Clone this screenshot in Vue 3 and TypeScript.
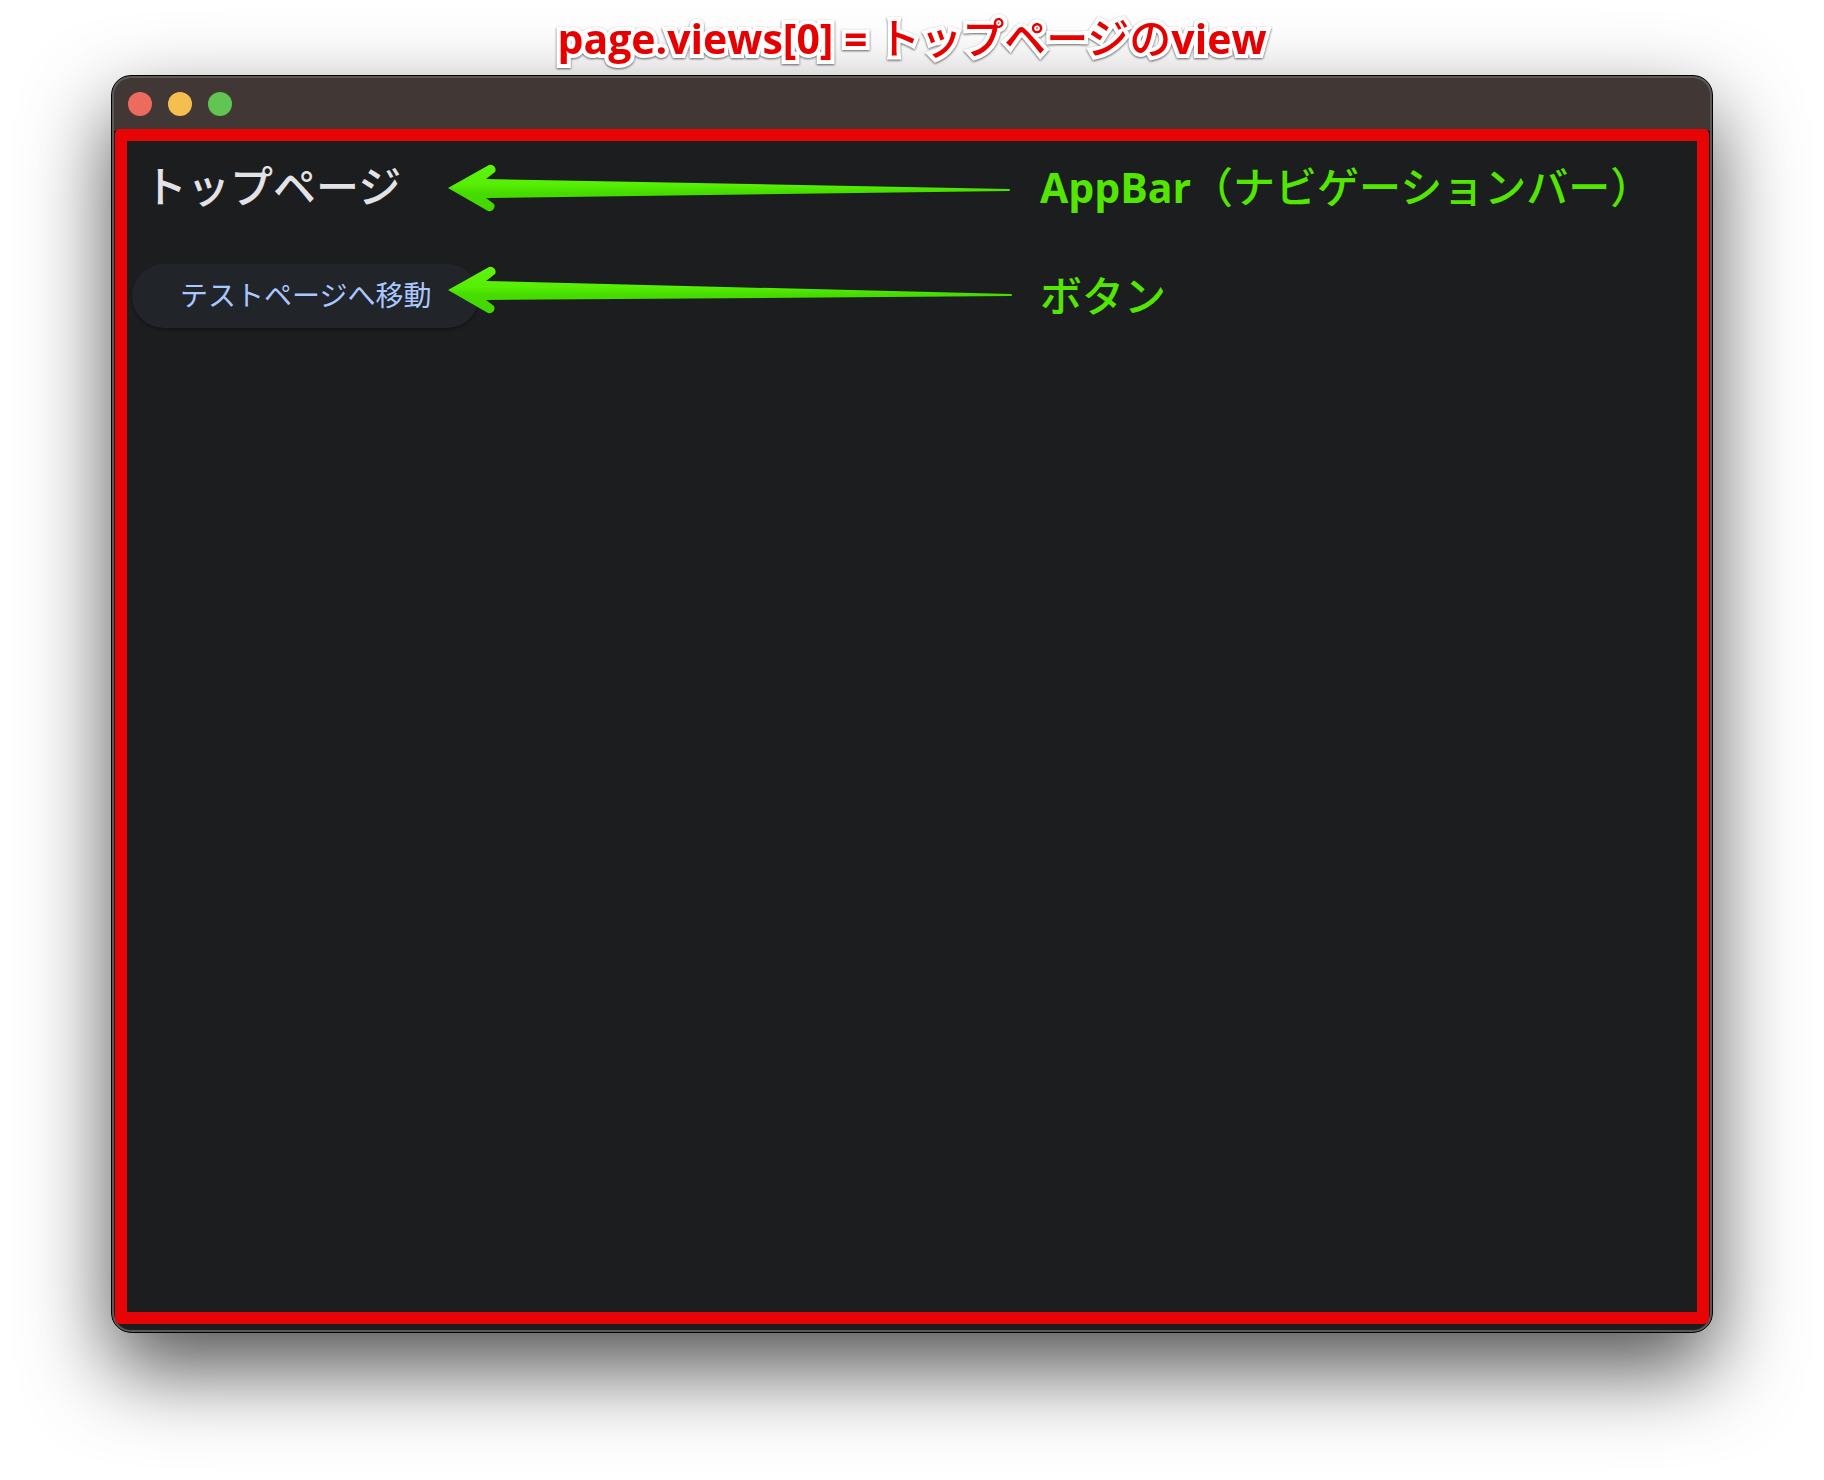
<script setup lang="ts">
interface Note {
  id: string
  latin: string
  kana: string
  arrow: string
}

const title = 'トップページ'
const buttonLabel = 'テストページへ移動'
const controls: string[] = ['close', 'minimize', 'zoom']
const notes: Note[] = [
  {
    id: 'first',
    latin: 'AppBar',
    kana: '（ナビゲーションバー）',
    arrow: 'M0 25 L41 2 A5 5 0 0 1 47 9 L38 16 L561 26 A1 1 0 0 1 561 28 L38 35 L46 41 A5 5 0 0 1 40 48 Z',
  },
  {
    id: 'second',
    latin: '',
    kana: 'ボタン',
    arrow: 'M0 25 L41 2 A5 5 0 0 1 47 9 L38 16 L563 29 A1 1 0 0 1 563 31 L38 35 L46 41 A5 5 0 0 1 40 48 Z',
  },
]
</script>

<template>
  <div class="page">
    <h1 class="heading">
      <span class="latin">page.views[0] = </span>トップページの<span class="latin">view</span>
    </h1>
    <main class="window">
      <header class="titlebar">
        <button
          v-for="name in controls"
          :key="name"
          type="button"
          class="dot"
          :class="name"
          :aria-label="name"
        ></button>
      </header>
      <section class="view">
        <div class="appbar">
          <h2 class="title">{{ title }}</h2>
        </div>
        <div class="body">
          <button type="button" class="move">{{ buttonLabel }}</button>
        </div>
        <div class="notes">
          <div v-for="note in notes" :key="note.id" class="note">
            <svg class="arrow" width="564" height="50" viewBox="0 0 564 50" aria-hidden="true">
              <defs>
                <linearGradient :id="'fill-' + note.id" x1="0" y1="0" x2="0" y2="1">
                  <stop offset="0" stop-color="#5cf50c" />
                  <stop offset="0.45" stop-color="#56ee04" />
                  <stop offset="0.6" stop-color="#46dc00" />
                  <stop offset="1" stop-color="#42d600" />
                </linearGradient>
              </defs>
              <path :fill="`url(#fill-${note.id})`" :d="note.arrow" />
            </svg>
            <span class="caption"><span class="latin">{{ note.latin }}</span>{{ note.kana }}</span>
          </div>
        </div>
      </section>
    </main>
  </div>
</template>

<style>
body {
  margin: 0;
  background: #fff;
}
</style>

<style scoped>
.page {
  box-sizing: border-box;
  min-height: 100vh;
  padding: 0 111px 147px;
  display: flex;
  flex-direction: column;
  overflow: hidden;
  font-family: "Open Sans", "Noto Sans CJK JP", sans-serif;
}

.heading {
  position: relative;
  z-index: 1;
  margin: 0;
  height: 75px;
  line-height: 75px;
  text-align: center;
  white-space: nowrap;
  font-size: 42px;
  font-weight: 500;
  color: #e60000;
  -webkit-text-stroke: 8px #fff;
  paint-order: stroke fill;
  stroke-linejoin: round;
  filter: drop-shadow(0 1px 1px rgba(0, 0, 0, 0.6));
}

.latin {
  font-size: 41px;
  font-weight: 700;
}

.window {
  flex: 1;
  box-sizing: border-box;
  display: flex;
  flex-direction: column;
  border: 1px solid #000;
  border-radius: 20px;
  padding: 0 3px 8px;
  background: linear-gradient(#413735 55px, #000 55px, #000 56px, #1c1d1f 56px);
  box-shadow:
    inset 0 0 0 2px #5a5958,
    inset 0 1px 0 1px #77706e,
    0 36px 84px rgba(0, 0, 0, 0.68);
}

.titlebar {
  height: 53px;
  padding: 2px 13px 0;
  box-sizing: border-box;
  display: flex;
  align-items: center;
  gap: 16px;
}

.dot {
  width: 24px;
  height: 24px;
  padding: 0;
  border: 0;
  border-radius: 50%;
}

.close {
  background: #ed6a5e;
}

.minimize {
  background: #f5bf4f;
}

.zoom {
  background: #61c554;
}

.view {
  position: relative;
  flex: 1;
  border: 12px solid #e60404;
  border-radius: 5px;
  background: #1c1d1f;
}

.appbar {
  height: 92px;
  padding: 0 17px;
  display: flex;
  align-items: center;
}

.title {
  margin: 0;
  font-size: 43px;
  line-height: 60px;
  font-weight: 500;
  color: #e3e2e6;
}

.body {
  padding: 31px 5px;
}

.move {
  height: 64px;
  padding: 0 48px 4px;
  border: 0;
  border-radius: 32px;
  background: #212429;
  box-shadow: 0 2px 3px rgba(0, 0, 0, 0.3);
  font-family: inherit;
  font-size: 28px;
  font-weight: 400;
  color: #aac7ff;
}

.notes {
  position: absolute;
  top: 22px;
  left: 321px;
  display: flex;
  flex-direction: column;
  gap: 52px;
}

.note {
  display: flex;
  align-items: center;
  gap: 28px;
  height: 50px;
}

.caption {
  padding-bottom: 2px;
  font-size: 42px;
  line-height: 48px;
  font-weight: 500;
  white-space: nowrap;
  color: #52e600;
}

.note + .note .caption {
  padding: 12px 0 0;
}

.arrow {
  flex: none;
}
</style>
